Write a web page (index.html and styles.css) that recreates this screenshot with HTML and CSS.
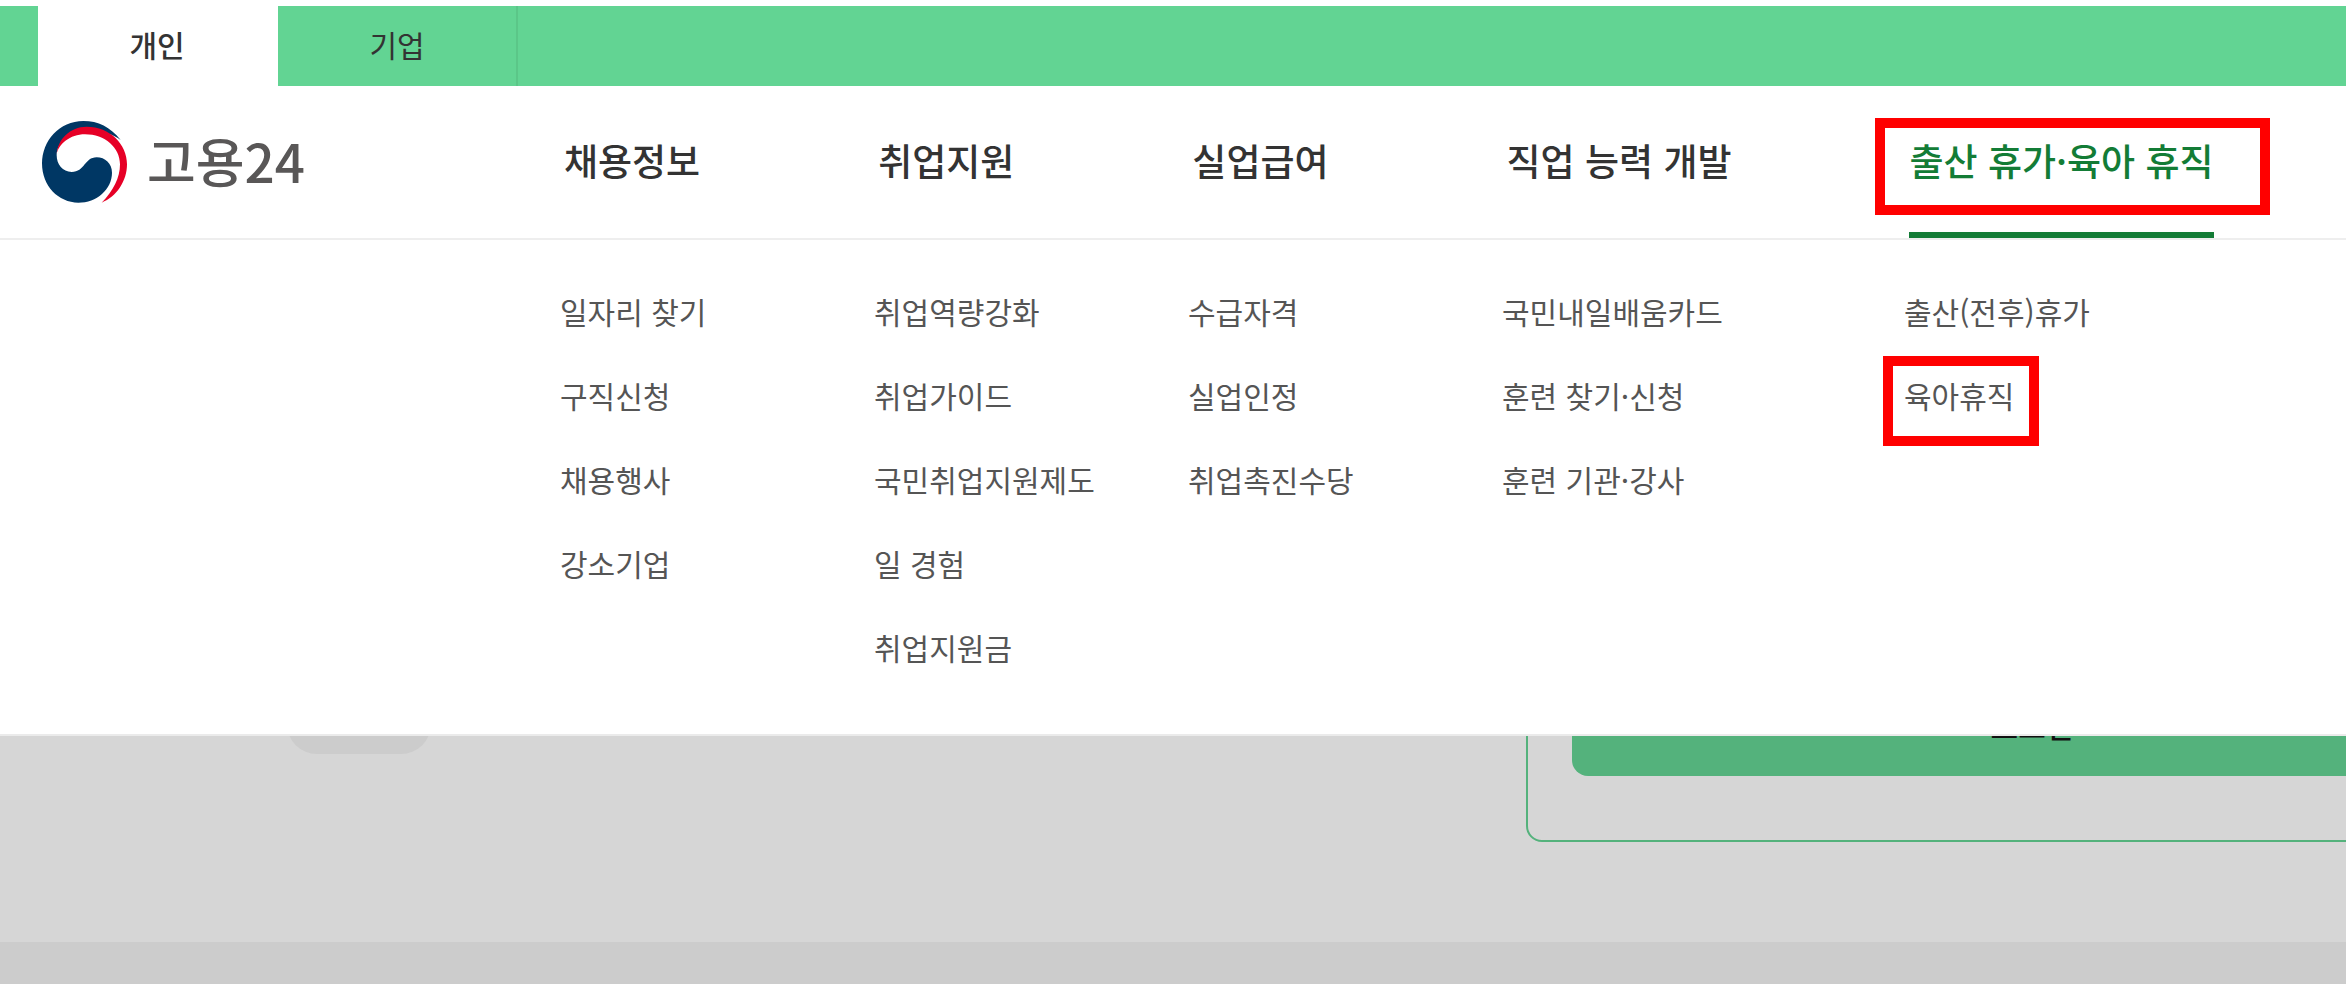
FILE: index.html
```html
<!DOCTYPE html>
<html lang="ko">
<head>
  <meta charset="UTF-8">
  <meta name="viewport" content="width=device-width, initial-scale=1.0">
  <title>고용24</title>
  <link rel="stylesheet" href="styles.css">
</head>
<body>

  <!-- 개인 / 기업 탭 -->
  <div class="top-bar">
    <a href="#" class="top-tab active">개인</a>
    <a href="#" class="top-tab">기업</a>
  </div>

  <header class="header">
    <a href="#" class="logo">
      <svg class="logo-mark" viewBox="36 35 255 246" aria-hidden="true">
        <path fill="#003764" d="M272 92C240 52 205 35 160 35C88 35 36 95 36 162C36 230 85 280 145 280C200 280 246 240 246 190C246 162 225 144 200 144C163 144 165 188 125 188C98 188 80 165 80 138C80 98 120 66 165 64C210 62 250 75 272 92Z"/>
        <path fill="#e60026" d="M80 135C83 90 120 52 170 52C240 52 291 105 291 165C291 215 260 262 215 280C250 245 270 205 270 165C270 115 225 75 165 75C120 75 85 105 80 135Z"/>
      </svg>
      <span class="logo-text">고용24</span>
    </a>

    <nav class="main-nav">
      <a href="#">채용정보</a>
      <a href="#">취업지원</a>
      <a href="#">실업급여</a>
      <a href="#">직업 능력 개발</a>
      <a href="#" class="active marked">출산 휴가·육아 휴직</a>
    </nav>

    <!-- 전체 하위 메뉴 -->
    <div class="sub-menu">
      <ul>
        <li><a href="#">일자리 찾기</a></li>
        <li><a href="#">구직신청</a></li>
        <li><a href="#">채용행사</a></li>
        <li><a href="#">강소기업</a></li>
      </ul>
      <ul>
        <li><a href="#">취업역량강화</a></li>
        <li><a href="#">취업가이드</a></li>
        <li><a href="#">국민취업지원제도</a></li>
        <li><a href="#">일 경험</a></li>
        <li><a href="#">취업지원금</a></li>
      </ul>
      <ul>
        <li><a href="#">수급자격</a></li>
        <li><a href="#">실업인정</a></li>
        <li><a href="#">취업촉진수당</a></li>
      </ul>
      <ul>
        <li><a href="#">국민내일배움카드</a></li>
        <li><a href="#">훈련 찾기·신청</a></li>
        <li><a href="#">훈련 기관·강사</a></li>
      </ul>
      <ul>
        <li><a href="#">출산(전후)휴가</a></li>
        <li><a href="#" class="marked">육아휴직</a></li>
      </ul>
    </div>
  </header>

  <main class="content">
    <div class="chip"></div>
    <div class="login-box">
      <button type="button" class="login-button">로그인</button>
    </div>
  </main>

  <div class="bottom-band"></div>

</body>
</html>
```

FILE: styles.css
```css
/* 기본 설정 */
* {
  box-sizing: border-box;
}

body {
  margin: 0;
  padding-top: 6px;
  min-height: 100vh;
  display: flex;
  flex-direction: column;
  overflow-x: hidden;
  background-color: #fff;
  color: #333;
  font-family: "Noto Sans CJK KR", sans-serif;
  font-size: 30px;
}

a {
  color: inherit;
  text-decoration: none;
}

ul {
  margin: 0;
  padding: 0;
  list-style: none;
}

/* 상단 탭 */
.top-bar {
  display: flex;
  padding-left: 38px;
  background-color: #62d493;
}

.top-tab {
  width: 240px;
  padding-bottom: 4px;
  line-height: 76px;
  text-align: center;
  border-right: 2px solid #5bc688;
}

.top-tab.active {
  background-color: #fff;
  border-color: #fff;
  font-weight: 500;
}

/* 헤더 */
.header {
  position: relative;
  display: flex;
  align-items: stretch;
  height: 154px;
  padding-left: 42px;
  background-color: #fff;
  border-bottom: 2px solid #eee;
}

.logo {
  display: flex;
  align-items: center;
  gap: 20px;
  width: 522px;
  flex-shrink: 0;
}

.logo-mark {
  width: 85px;
  height: 82px;
}

.logo-text {
  padding-bottom: 4px;
  color: #595757;
  font-size: 53px;
  font-weight: 500;
  line-height: 80px;
}

.main-nav {
  display: flex;
  gap: 178px;
  font-size: 37px;
  font-weight: 500;
  line-height: 148px;
  white-space: nowrap;
}

.main-nav a {
  position: relative;
}

.main-nav .active {
  color: #137c36;
  box-shadow: inset 0 -6px #137c36;
}

/* 하위 메뉴 */
.sub-menu {
  position: absolute;
  top: 100%;
  left: 0;
  right: 0;
  z-index: 10;
  margin-top: 2px;
  display: grid;
  grid-template-columns: 314px 314px 314px 402px 1fr;
  padding: 29px 0 45px 560px;
  background-color: #fff;
  border-bottom: 2px solid #ebebeb;
  color: #555;
  line-height: 84px;
  white-space: nowrap;
}

.sub-menu a {
  position: relative;
}

/* 빨간 강조 표시 */
.marked::after {
  content: "";
  position: absolute;
  border: 10px solid #f00;
}

.main-nav .marked::after {
  top: 32px;
  bottom: 23px;
  left: -34px;
  right: -56px;
}

.sub-menu .marked::after {
  top: -17px;
  bottom: -29px;
  left: -21px;
  right: -25px;
}

/* 본문 */
.content {
  flex: 1;
  display: flex;
  justify-content: space-between;
  align-items: flex-end;
  padding: 0 0 100px 287px;
  overflow: hidden;
  background-color: #d6d6d6;
}

.chip {
  width: 144px;
  height: 60px;
  margin-bottom: 88px;
  border-radius: 30px;
  background-color: #ccc;
}

.login-box {
  flex-shrink: 0;
  width: 1012px;
  margin-right: -192px;
  padding: 44px 44px 64px;
  border: 2px solid #54b27c;
  border-radius: 16px;
}

.login-button {
  width: 100%;
  height: 96px;
  padding: 0 0 6px;
  border: none;
  border-radius: 16px;
  background-color: #54b27c;
  color: #111;
  font-family: inherit;
  font-size: 30px;
  font-weight: 500;
}

.bottom-band {
  height: 42px;
  background-color: #ccc;
}
```
